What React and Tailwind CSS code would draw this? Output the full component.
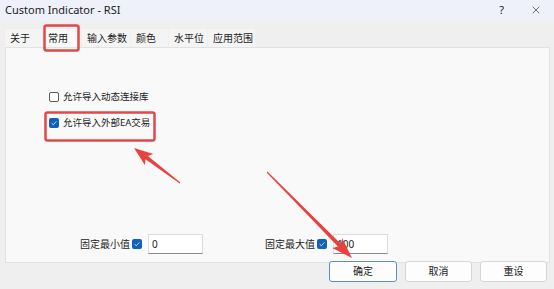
import { X } from "lucide-react";

const CJK = "font-['Noto_Sans','Noto_Sans_CJK_SC',sans-serif]";

const tabs = [
    { label: "关于", w: "w-[37px]" },
    { label: "常用", w: "w-[38px]", active: true },
    { label: "输入参数", w: "w-[48px]" },
    { label: "颜色", w: "w-[37px]" },
    { label: "水平位", w: "w-[38px]" },
    { label: "应用范围", w: "w-[47px]" },
];

const Check = ({ checked }) =>
    checked ? (
        <span className="flex h-[10px] w-[10px] items-center justify-center rounded-[2px] bg-[#0f62b8]">
            <svg viewBox="0 0 10 10" className="h-[8px] w-[8px]">
                <path d="M2 5.2 L4.1 7.2 L8 3" fill="none" stroke="#dbe8f7" strokeWidth="1.1" />
            </svg>
        </span>
    ) : (
        <span className="h-[10px] w-[10px] rounded-[2px] border border-[#5b5b5b] bg-white" />
    );

const Annotations = () => (
    <svg className="pointer-events-none absolute inset-0" width="554" height="289" viewBox="0 0 554 289">
        <rect x="44.5" y="25.5" width="34" height="25" rx="2" fill="none" stroke="#e2474a" strokeWidth="2.5" />
        <rect x="45.5" y="112.5" width="109" height="28" rx="2" fill="none" stroke="#e2474a" strokeWidth="2.5" />
        <polygon
            fill="#e8423f"
            points="180.3,182.6 147.9,156.1 153.3,153.9 134,148 144.9,165.1 145.5,159.3 179.7,183.4"
        />
        <polygon
            fill="#e8423f"
            points="266.6,172.4 337.9,246.6 332.2,248 352,258 342.2,238.2 340.8,243.8 267.4,171.6"
        />
    </svg>
);

export default function App() {
    return (
        <div className={`relative flex h-[289px] w-[554px] flex-col overflow-hidden bg-[#efefef] text-[#1b1b1b] ${CJK}`}>
            <div className="flex h-[20px] shrink-0 items-center justify-between bg-[#eef1f9] pl-[5px] pr-[12px]">
                <span className="text-[11px]">Custom Indicator - RSI</span>
                <div className="flex items-center gap-[26px]">
                    <span className="text-[11px]">?</span>
                    <X size={12} strokeWidth={1.2} />
                </div>
            </div>

            <div className="mt-[9px] flex h-[18px] shrink-0 gap-[1px] pl-[5px] text-[10px]">
                {tabs.map((t) => (
                    <div
                        key={t.label}
                        className={`${t.w} flex items-center pl-[5px] ${t.active ? "bg-[#f9f9f9]" : "bg-[#f4f4f4]"}`}
                    >
                        {t.label}
                    </div>
                ))}
            </div>

            <div className="ml-[5px] mr-[4px] flex h-[216px] shrink-0 flex-col border border-[#e2e2e2] bg-[#f9f9f9] text-[10px]">
                <div className="mt-[42px] flex flex-col gap-[12px] pl-[43px] text-[9.5px]">
                    <label className="flex items-center gap-[4px]">
                        <Check />
                        <span>允许导入动态连接库</span>
                    </label>
                    <label className="flex items-center gap-[4px]">
                        <Check checked />
                        <span>允许导入外部EA交易</span>
                    </label>
                </div>
                <div className="mt-auto mb-[8px] flex items-center pl-[74px]">
                    <div className="flex items-center">
                        <span>固定最小值</span>
                        <span className="ml-[2px]"><Check checked /></span>
                        <div className="ml-[6px] flex h-[20px] w-[55px] items-center border border-[#dcdcdc] border-b-[#8a8a8a] bg-white pl-[3px]">0</div>
                    </div>
                    <div className="ml-[62px] flex items-center">
                        <span>固定最大值</span>
                        <span className="ml-[2px]"><Check checked /></span>
                        <div className="ml-[6px] flex h-[20px] w-[55px] items-center border border-[#dcdcdc] border-b-[#8a8a8a] bg-white pl-[3px]">100</div>
                    </div>
                </div>
            </div>

            <div className="mt-[-2px] flex justify-end gap-[8px] pr-[7px] text-[10px]">
                <button className="flex h-[21px] w-[68px] items-center justify-center rounded-[3px] border border-[#5b8fc9] bg-[#fdfdfd]">确定</button>
                <button className="flex h-[21px] w-[67px] items-center justify-center rounded-[3px] border border-[#d6d6d6] bg-[#fdfdfd]">取消</button>
                <button className="flex h-[21px] w-[67px] items-center justify-center rounded-[3px] border border-[#d6d6d6] bg-[#fdfdfd]">重设</button>
            </div>

            <Annotations />
        </div>
    );
}
